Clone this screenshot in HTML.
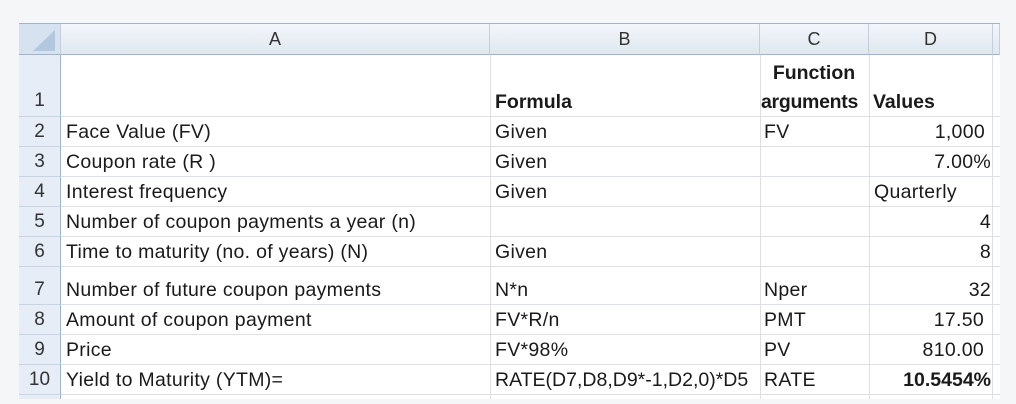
<!DOCTYPE html>
<html><head><style>
body{margin:0;width:1016px;height:404px;background:#f4f6f8;position:relative;overflow:hidden;font-family:"Liberation Sans",sans-serif;color:#1a1a1a}
.s{position:absolute;left:19px;top:23px;width:981px;height:375px;background:#fff;border-top:1px solid #9fb3cc}
.h{position:absolute;top:0;height:31px;background:linear-gradient(#f3f6fa,#e0e7f0);border-right:1px solid #c5cfdc;border-bottom:1px solid #9fb3cc;box-sizing:border-box;text-align:center;font-size:18px;line-height:31px;color:#333}
.rn{position:absolute;left:0;width:42px;background:#e6edf6;border-bottom:1px solid #c8d4e3;border-right:1px solid #9fb3cc;box-sizing:border-box;text-align:center;font-size:19px;color:#333}
.c{position:absolute;font-size:19.5px;white-space:nowrap;letter-spacing:.3px;line-height:22px}
.vl{position:absolute;top:31px;width:1px;height:344px;background:#dcdfe3}
.hl{position:absolute;left:42px;width:939px;height:1px;background:#dcdfe3}
b{font-weight:bold;letter-spacing:0}
</style></head><body>
<div class="s">
<div class="h" style="left:0;width:42px;background:#d6e2f0"><svg width="42" height="31" style="position:absolute;left:0;top:0"><polygon points="36,6 36,27 14,27" fill="#b3c7df"/></svg></div>
<div class="h" style="left:42px;width:429px">A</div>
<div class="h" style="left:471px;width:270px">B</div>
<div class="h" style="left:741px;width:109px">C</div>
<div class="h" style="left:850px;width:124px">D</div>
<div class="h" style="left:974px;width:7px"></div>

<div class="vl" style="left:471px"></div><div class="vl" style="left:741px"></div><div class="vl" style="left:850px"></div><div class="vl" style="left:973px"></div>
<div class="hl" style="top:92px"></div><div class="hl" style="top:122px"></div><div class="hl" style="top:152px"></div><div class="hl" style="top:182px"></div><div class="hl" style="top:212px"></div><div class="hl" style="top:242px"></div><div class="hl" style="top:280px"></div><div class="hl" style="top:310px"></div><div class="hl" style="top:340px"></div><div class="hl" style="top:370px"></div>

<div class="rn" style="top:31px;height:62px;line-height:92px">1</div>
<div class="rn" style="top:93px;height:30px;line-height:30px">2</div>
<div class="rn" style="top:123px;height:30px;line-height:30px">3</div>
<div class="rn" style="top:153px;height:30px;line-height:30px">4</div>
<div class="rn" style="top:183px;height:30px;line-height:30px">5</div>
<div class="rn" style="top:213px;height:30px;line-height:30px">6</div>
<div class="rn" style="top:243px;height:38px;line-height:46px">7</div>
<div class="rn" style="top:281px;height:30px;line-height:30px">8</div>
<div class="rn" style="top:311px;height:30px;line-height:30px">9</div>
<div class="rn" style="top:341px;height:30px;line-height:30px">10</div>
<div class="rn" style="top:371px;height:4px;border-bottom:none"></div>

<div class="c" style="left:476px;top:67px"><b>Formula</b></div>
<div class="c" style="left:743px;top:38px;width:104px;text-align:center"><b>Function</b></div>
<div class="c" style="left:742px;top:67px"><b style="letter-spacing:-.3px">arguments</b></div>
<div class="c" style="left:854px;top:67px"><b>Values</b></div>

<div class="c" style="left:47px;top:97px">Face Value (FV)</div><div class="c" style="left:476px;top:97px">Given</div><div class="c" style="left:745px;top:97px">FV</div><div class="c" style="right:15px;top:97px">1,000</div>
<div class="c" style="left:47px;top:127px">Coupon rate (R )</div><div class="c" style="left:476px;top:127px">Given</div><div class="c" style="right:9px;top:127px">7.00%</div>
<div class="c" style="left:47px;top:157px">Interest frequency</div><div class="c" style="left:476px;top:157px">Given</div><div class="c" style="left:855px;top:157px">Quarterly</div>
<div class="c" style="left:47px;top:187px">Number of coupon payments a year (n)</div><div class="c" style="right:9px;top:187px">4</div>
<div class="c" style="left:47px;top:217px">Time to maturity (no. of years) (N)</div><div class="c" style="left:476px;top:217px">Given</div><div class="c" style="right:9px;top:217px">8</div>
<div class="c" style="left:47px;top:255px">Number of future coupon payments</div><div class="c" style="left:476px;top:255px">N*n</div><div class="c" style="left:745px;top:255px">Nper</div><div class="c" style="right:9px;top:255px">32</div>
<div class="c" style="left:47px;top:285px">Amount of coupon payment</div><div class="c" style="left:476px;top:285px">FV*R/n</div><div class="c" style="left:745px;top:285px">PMT</div><div class="c" style="right:16px;top:285px">17.50</div>
<div class="c" style="left:47px;top:315px">Price</div><div class="c" style="left:476px;top:315px">FV*98%</div><div class="c" style="left:745px;top:315px">PV</div><div class="c" style="right:16px;top:315px">810.00</div>
<div class="c" style="left:47px;top:345px">Yield to Maturity (YTM)=</div><div class="c" style="left:476px;top:345px;letter-spacing:0">RATE(D7,D8,D9*-1,D2,0)*D5</div><div class="c" style="left:745px;top:345px">RATE</div><div class="c" style="right:9px;top:345px"><b>10.5454%</b></div>
</div>
</body></html>
